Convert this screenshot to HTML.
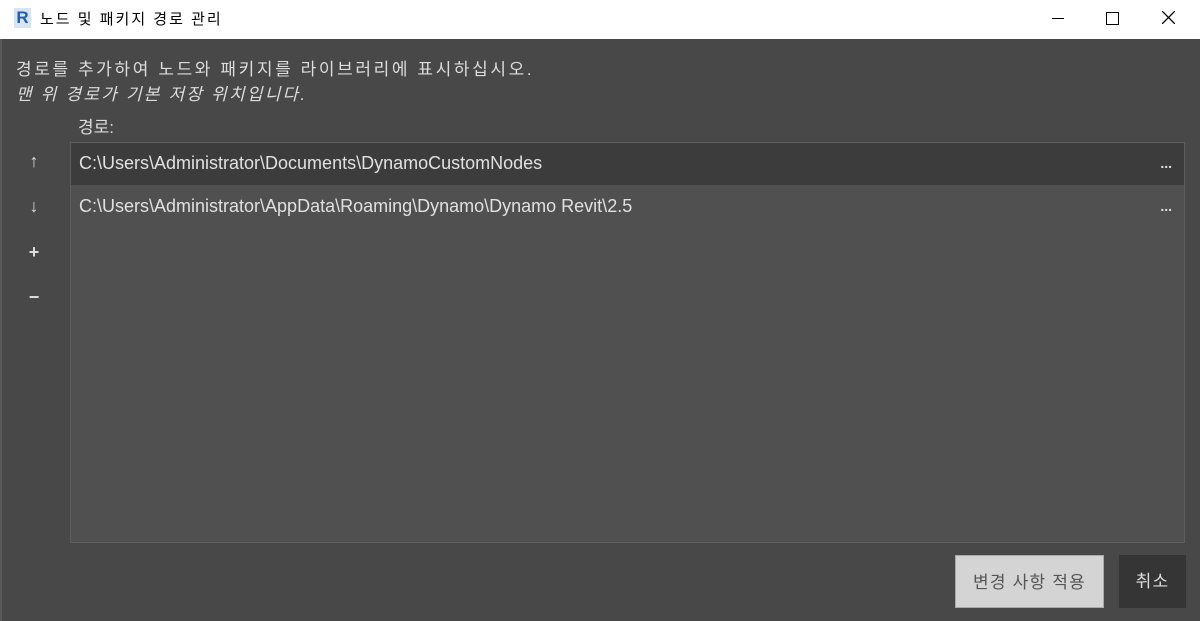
<!DOCTYPE html>
<html><head><meta charset="utf-8"><style>
body{margin:0;width:1200px;height:621px;overflow:hidden;font-family:"Liberation Sans","Noto Sans CJK KR",sans-serif;background:#fff;position:relative}
.title{position:absolute;left:0;top:0;width:1200px;height:38px;background:#fff}
.title .t{position:absolute;left:40px;top:8px;font-size:15px;color:#000;letter-spacing:2px}
.logo{position:absolute;left:14px;top:8px;width:17px;height:20px;background:#d6e4f4;color:#1f5fae;font-weight:bold;font-size:17px;line-height:20px;text-align:center}
.main{position:absolute;left:0;top:39px;width:1200px;height:582px;background:#484848;border-left:2px solid #5a5a5a;box-sizing:border-box}
.txt{position:absolute;color:#ddd;font-size:17px}
.list{position:absolute;left:70px;top:142px;width:1115px;height:401px;background:#505050;border:1px solid #5e5e5e;box-sizing:border-box}
.row{position:absolute;left:0;width:1113px;height:42px;color:#e0e0e0;font-size:18px;line-height:40px;padding-left:8px;box-sizing:border-box}
.dots{position:absolute;right:12px;top:0;font-size:14px;font-weight:bold}
.side{position:absolute;left:26px;color:#ddd;font-size:18px;width:16px;text-align:center;font-weight:bold}
.btn{position:absolute;top:555px;height:53px;font-size:17px;text-align:center;line-height:53px;letter-spacing:1.2px}
</style></head><body>
<div class="title"><div class="logo">R</div><div class="t">노드 및 패키지 경로 관리</div>
<div style="position:absolute;left:1052px;top:18px;width:12px;height:1px;background:#000"></div>
<div style="position:absolute;left:1106px;top:12px;width:11px;height:11px;border:1px solid #000"></div>
<svg style="position:absolute;left:1162px;top:11px" width="13" height="13"><path d="M0 0L13 13M13 0L0 13" stroke="#000" stroke-width="1.3"/></svg></div>
<div class="main"></div>
<div class="txt" style="left:16px;top:55px;letter-spacing:2.6px">경로를 추가하여 노드와 패키지를 라이브러리에 표시하십시오.</div>
<div class="txt" style="left:16px;top:80px;font-style:italic;letter-spacing:2.2px">맨 위 경로가 기본 저장 위치입니다.</div>
<div class="txt" style="left:78px;top:113px">경로:</div>
<div class="side" style="top:151px">↑</div>
<div class="side" style="top:196px">↓</div>
<div class="side" style="top:242px">+</div>
<div class="side" style="top:287px">−</div>
<div class="list">
<div class="row" style="top:0;background:#3c3c3c">C:\Users\Administrator\Documents\DynamoCustomNodes<span class="dots">...</span></div>
<div class="row" style="top:43px">C:\Users\Administrator\AppData\Roaming\Dynamo\Dynamo Revit\2.5<span class="dots">...</span></div>
</div>
<div class="btn" style="left:955px;width:149px;background:#d4d4d4;color:#555;border:1px solid #aaa;box-sizing:border-box">변경 사항 적용</div>
<div class="btn" style="left:1119px;width:67px;background:#353535;color:#ddd">취소</div>
</body></html>
